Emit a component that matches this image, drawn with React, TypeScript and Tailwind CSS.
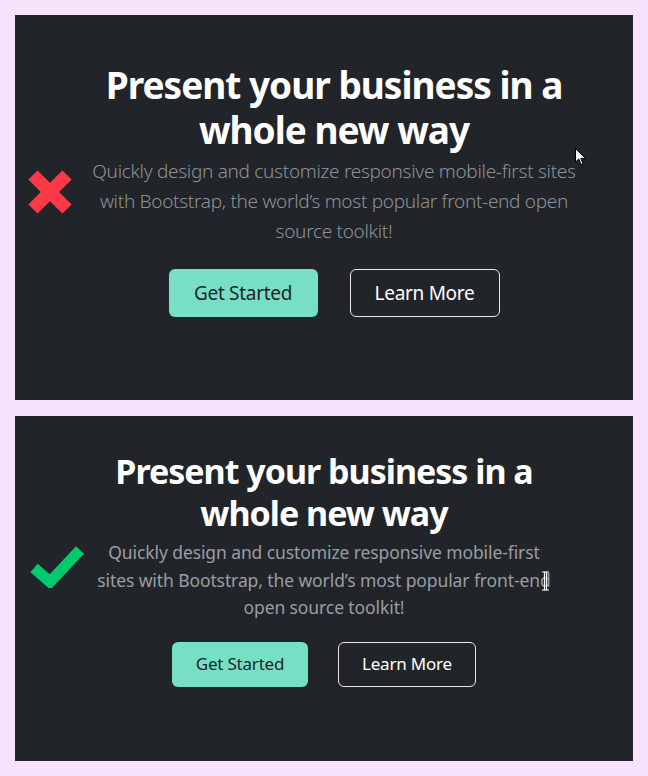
import React from "react";

const font = { fontFamily: '"Noto Sans", "Open Sans", sans-serif' };

function XIcon() {
  return (
    <svg width="44" height="44" viewBox="0 0 44 44" className="absolute left-[13px] top-[155px]">
      <line x1="5" y1="5" x2="39" y2="39" stroke="#fd3947" strokeWidth="13" />
      <line x1="39" y1="5" x2="5" y2="39" stroke="#fd3947" strokeWidth="13" />
    </svg>
  );
}

function CheckIcon() {
  return (
    <svg width="56" height="44" viewBox="0 0 56 44" className="absolute left-[14px] top-[128px]">
      <polyline points="5,24 21,38 51,6" fill="none" stroke="#00c96e" strokeWidth="11" strokeLinejoin="miter" />
    </svg>
  );
}

function Cursor() {
  return (
    <svg width="12" height="18" viewBox="0 0 12 18" className="absolute left-[560px] top-[133px]">
      <path d="M0.5 0.5 L0.5 14 L3.8 11 L6 16.5 L8 15.6 L5.8 10.4 L10.5 10.4 Z" fill="#ffffff" stroke="#000000" strokeWidth="1" />
    </svg>
  );
}

function IBeam() {
  return (
    <svg width="9" height="20" viewBox="0 0 9 20" className="absolute left-[526px] top-[155px]">
      <path d="M1 1 H3.5 V19 H1 M8 1 H5.5 V19 H8" fill="none" stroke="#ffffff" strokeWidth="1.2" />
      <path d="M3.5 1 H5.5 M3.5 19 H5.5" stroke="#ffffff" strokeWidth="1.2" />
    </svg>
  );
}

export default function App() {
  return (
    <div className="min-h-screen bg-[#f6e2fb] p-[15px] flex flex-col gap-[16px]" style={font}>
      <section className="relative h-[385px] bg-[#212529] pt-[47px] pl-[20px] flex flex-col items-center">
        <XIcon />
        <Cursor />
        <h1 className="text-[37px] font-bold leading-[45px] text-white text-center tracking-[-1px]">
          Present your business in a<br />whole new way
        </h1>
        <p className="mt-[4px] text-[19px] font-light leading-[30px] text-[#8d9196] text-center tracking-[-0.3px]">
          Quickly design and customize responsive mobile-first sites<br />
          with Bootstrap, the world’s most popular front-end open<br />
          source toolkit!
        </p>
        <div className="mt-[23px] flex gap-[32px]">
          <button className="w-[149px] h-[48px] rounded-[6px] bg-[#77dfc3] text-[19px] tracking-[-0.3px] text-[#212529]">
            Get Started
          </button>
          <button className="w-[150px] h-[48px] rounded-[6px] border border-[#e8e8ea] text-[19px] tracking-[-0.3px] text-white">
            Learn More
          </button>
        </div>
      </section>
      <section className="relative h-[345px] bg-[#212529] pt-[34px] flex flex-col items-center">
        <CheckIcon />
        <IBeam />
        <h1 className="text-[34px] font-bold leading-[42px] text-white text-center tracking-[-1px]">
          Present your business in a<br />whole new way
        </h1>
        <p className="mt-[5px] text-[17.5px] font-normal leading-[27.5px] text-[#999da2] text-center tracking-[-0.1px]">
          Quickly design and customize responsive mobile-first<br />
          sites with Bootstrap, the world’s most popular front-end<br />
          open source toolkit!
        </p>
        <div className="mt-[20px] flex gap-[30px]">
          <button className="w-[136px] h-[45px] rounded-[6px] bg-[#77dfc3] text-[17px] tracking-[-0.2px] text-[#212529]">
            Get Started
          </button>
          <button className="w-[138px] h-[45px] rounded-[6px] border border-[#e8e8ea] text-[17px] tracking-[-0.2px] text-white">
            Learn More
          </button>
        </div>
      </section>
    </div>
  );
}
